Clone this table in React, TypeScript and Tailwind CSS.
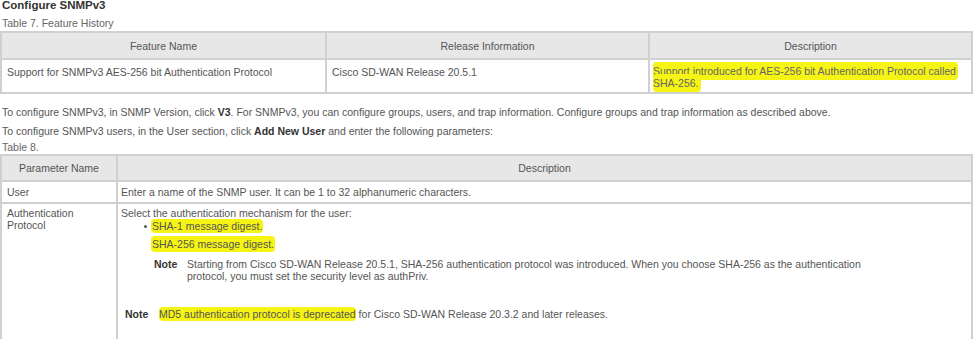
import React from 'react'

const hl = 'bg-[#f5f414] rounded-[4px] [box-decoration-break:clone] [-webkit-box-decoration-break:clone]'

export default function App() {
  return (
    <div className="w-[973px] h-[339px] overflow-hidden bg-white text-[#555] text-[10.5px] leading-[12px] font-['Liberation_Sans',Arial,sans-serif]">
      <div className="pl-[2px] font-bold text-[#333] text-[11.5px] leading-[11px] h-[12px]">Configure SNMPv3</div>
      <div className="pl-[2px] mt-[5px] text-[#666] h-[14px]">Table 7. Feature History</div>

      {/* Feature history */}
      <table className="w-[973px] border-collapse table-fixed">
        <colgroup>
          <col className="w-[325px]" />
          <col className="w-[323px]" />
          <col />
        </colgroup>
        <thead>
          <tr className="bg-[#e7e7e7] h-[27px]">
            <th className="border-2 border-[#d0d0d0] font-normal text-center align-middle">Feature Name</th>
            <th className="border-2 border-[#d0d0d0] font-normal text-center align-middle">Release Information</th>
            <th className="border-2 border-[#d0d0d0] font-normal text-center align-middle">Description</th>
          </tr>
        </thead>
        <tbody>
          <tr className="h-[34px]">
            <td className="border-2 border-[#d0d0d0] align-top px-[5px] pt-[6px]">Support for SNMPv3 AES-256 bit Authentication Protocol</td>
            <td className="border-2 border-[#d0d0d0] align-top px-[5px] pt-[6px]">Cisco SD-WAN Release 20.5.1</td>
            <td className="border-2 border-[#d0d0d0] align-top pl-[3px] pr-[2px] pt-[5px]">
              <span className={`${hl} text-[#666] py-[3px] pr-[2px]`}>Support introduced for AES-256 bit Authentication Protocol called SHA-256.</span>
            </td>
          </tr>
        </tbody>
      </table>

      <p className="pl-[2px] mt-[12px] h-[19px]">
        To configure SNMPv3, in SNMP Version, click <b className="text-[#333]">V3</b>. For SNMPv3, you can configure groups, users, and trap information. Configure groups and trap information as described above.
      </p>
      <p className="pl-[2px] h-[16px]">
        To configure SNMPv3 users, in the User section, click <b className="text-[#333]">Add New User</b> and enter the following parameters:
      </p>
      <div className="pl-[2px] text-[#666] h-[13px]">Table 8.</div>

      {/* Parameters */}
      <table className="w-[973px] border-collapse table-fixed">
        <colgroup>
          <col className="w-[116px]" />
          <col />
        </colgroup>
        <thead>
          <tr className="bg-[#e7e7e7] h-[26px]">
            <th className="border-2 border-[#d0d0d0] font-normal text-center align-middle">Parameter Name</th>
            <th className="border-2 border-[#d0d0d0] font-normal text-center align-middle">Description</th>
          </tr>
        </thead>
        <tbody>
          <tr className="h-[22px]">
            <td className="border-2 border-[#d0d0d0] align-middle px-[5px]">User</td>
            <td className="border-2 border-[#d0d0d0] align-middle px-[3px]">Enter a name of the SNMP user. It can be 1 to 32 alphanumeric characters.</td>
          </tr>
          <tr>
            <td className="border-2 border-[#d0d0d0] align-top px-[5px] pt-[3px] h-[150px]">Authentication Protocol</td>
            <td className="border-2 border-[#d0d0d0] align-top px-[3px] pt-[3px]">
              <div>Select the authentication mechanism for the user:</div>
              <div className="flex items-center pl-[23px]">
                <span className="w-[3px] h-[3px] rounded-full bg-[#555] mr-[4px]"></span>
                <span className={`${hl} px-[1px] py-[1px]`}>SHA-1 message digest.</span>
              </div>
              <div className="pl-[30px] mt-[5px]">
                <span className={`${hl} px-[1px] py-[2px]`}>SHA-256 message digest.</span>
              </div>
              <div className="flex pl-[33px] mt-[8px]">
                <span className="font-bold text-[#333] w-[33px] shrink-0">Note</span>
                <span className="w-[695px]">Starting from Cisco SD-WAN Release 20.5.1, SHA-256 authentication protocol was introduced. When you choose SHA-256 as the authentication protocol, you must set the security level as authPriv.</span>
              </div>
              <div className="flex pl-[4px] mt-[26px]">
                <span className="font-bold text-[#333] w-[34px] shrink-0">Note</span>
                <span><span className={`${hl} py-[1px]`}>MD5 authentication protocol is deprecated</span> for Cisco SD-WAN Release 20.3.2 and later releases.</span>
              </div>
            </td>
          </tr>
        </tbody>
      </table>
    </div>
  )
}
